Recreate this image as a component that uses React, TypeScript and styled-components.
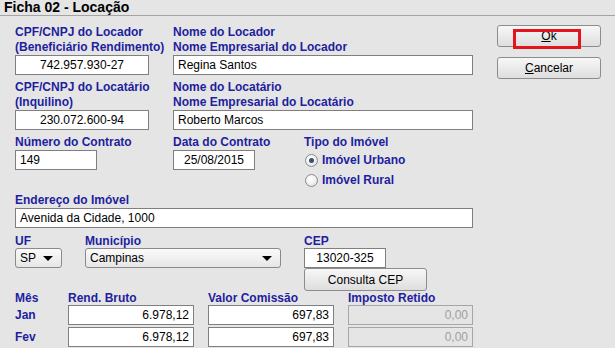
import React from "react";
import styled, { createGlobalStyle } from "styled-components";

const GlobalStyle = createGlobalStyle`
  html, body {
    margin: 0;
    padding: 0;
    background: #e5e5e5;
  }
  body {
    font-family: "Liberation Sans", Arial, sans-serif;
    font-size: 12px;
    color: #000;
  }
  * {
    box-sizing: border-box;
  }
`;

const Window = styled.div`
  width: 615px;
  height: 348px;
  overflow: hidden;
  background: #e5e5e5;
`;

const Header = styled.div`
  height: 16px;
  border-bottom: 1px solid #a3a3a3;
  padding-left: 4px;
  font-size: 14px;
  font-weight: bold;
  line-height: 15px;
`;

const Body = styled.div`
  display: flex;
  padding-left: 15px;
  gap: 24px;
`;

const Form = styled.div`
  width: 458px;
  padding-top: 9px;
  display: flex;
  flex-direction: column;
`;

const Row = styled.div<{ $cols: string; $top?: number }>`
  display: grid;
  grid-template-columns: ${(p) => p.$cols};
  margin-top: ${(p) => p.$top ?? 0}px;
  align-items: start;
`;

const Field = styled.div`
  display: flex;
  flex-direction: column;
`;

const Label = styled.label<{ $lh?: number }>`
  color: #1e1e9e;
  font-weight: bold;
  font-size: 12px;
  line-height: ${(p) => p.$lh ?? 15}px;
  white-space: nowrap;
`;

const Input = styled.input<{ $w: number; $align?: "left" | "center" | "right" }>`
  width: ${(p) => p.$w}px;
  height: 20px;
  border: 1px solid #7f7f7f;
  background: #fff;
  font-family: "Liberation Sans", Arial, sans-serif;
  font-size: 12px;
  color: #000;
  padding: 0 4px;
  margin: 0;
  outline: none;
  text-align: ${(p) => p.$align ?? "left"};

  &:disabled {
    background: #e5e5e5;
    border-color: #a6a6a6;
    color: #a0a0a0;
  }
`;

const RadioGroup = styled.div`
  display: flex;
  flex-direction: column;
`;

const RadioItem = styled.div`
  height: 20px;
  display: flex;
  align-items: center;
  gap: 4px;
  padding-left: 1px;
  color: #1e1e9e;
  font-weight: bold;
`;

const RadioCircle = styled.span<{ $checked?: boolean }>`
  width: 13px;
  height: 13px;
  border-radius: 50%;
  border: 1px solid #8a8a8a;
  background: radial-gradient(circle at 40% 35%, #ffffff 0%, #f0f0f0 50%, #d6d6d6 100%);
  display: flex;
  align-items: center;
  justify-content: center;

  &::after {
    content: "";
    display: ${(p) => (p.$checked ? "block" : "none")};
    width: 5px;
    height: 5px;
    border-radius: 50%;
    background: #3d4d7a;
  }
`;

const Select = styled.div<{ $w: number }>`
  width: ${(p) => p.$w}px;
  height: 20px;
  border: 1px solid #8a8a8a;
  border-radius: 3px;
  background: linear-gradient(#fbfbfb, #e6e6e6);
  display: flex;
  align-items: center;
  justify-content: space-between;
  padding: 0 8px 0 4px;
`;

const Arrow = styled.span`
  width: 0;
  height: 0;
  border-left: 5px solid transparent;
  border-right: 5px solid transparent;
  border-top: 5px solid #000;
`;

const Button = styled.button<{ $w: number; $h?: number }>`
  width: ${(p) => p.$w}px;
  height: ${(p) => p.$h ?? 22}px;
  border: 1px solid #8c8c8c;
  border-radius: 3px;
  background: linear-gradient(#f7f7f7, #dedede);
  font-family: "Liberation Sans", Arial, sans-serif;
  font-size: 12px;
  color: #000;
  padding: 0;
  margin: 0;
  position: relative;

  u {
    text-decoration: underline;
  }
`;

const Highlight = styled.span`
  position: absolute;
  left: 15px;
  top: 3px;
  width: 68px;
  height: 20px;
  border: 3px solid #e3141b;
`;

const Side = styled.div`
  padding-top: 9px;
  display: flex;
  flex-direction: column;
  gap: 10px;
`;

const CepBox = styled.div`
  display: flex;
  flex-direction: column;
`;

const MonthGrid = styled.div`
  display: grid;
  grid-template-columns: 53px 140px 140px 125px;
  grid-template-rows: 12px;
  grid-auto-rows: 20px;
  row-gap: 2px;
`;

const HeadCell = styled.div`
  color: #1e1e9e;
  font-weight: bold;
  line-height: 14px;
  height: 12px;
  white-space: nowrap;
`;

const MonthLabel = styled.div`
  color: #1e1e9e;
  font-weight: bold;
  line-height: 20px;
`;

const months = [
  { m: "Jan", bruto: "6.978,12", comissao: "697,83", imposto: "0,00" },
  { m: "Fev", bruto: "6.978,12", comissao: "697,83", imposto: "0,00" },
  { m: "Mar", bruto: "6.978,12", comissao: "697,83", imposto: "0,00" },
];

const App = () => {
  return (
    <Window>
      <GlobalStyle />
      <Header>Ficha 02 - Locação</Header>
      <Body>
        <Form>
          <Row $cols="158px 300px">
            <Field>
              <Label>CPF/CNPJ do Locador</Label>
              <Label>(Beneficiário Rendimento)</Label>
              <Input $w={134} $align="center" value="742.957.930-27" readOnly />
            </Field>
            <Field>
              <Label>Nome do Locador</Label>
              <Label>Nome Empresarial do Locador</Label>
              <Input $w={300} value="Regina Santos" readOnly />
            </Field>
          </Row>

          <Row $cols="158px 300px" $top={5}>
            <Field>
              <Label>CPF/CNPJ do Locatário</Label>
              <Label>(Inquilino)</Label>
              <Input $w={134} $align="center" value="230.072.600-94" readOnly />
            </Field>
            <Field>
              <Label>Nome do Locatário</Label>
              <Label>Nome Empresarial do Locatário</Label>
              <Input $w={300} value="Roberto Marcos" readOnly />
            </Field>
          </Row>

          <Row $cols="158px 131px 1fr" $top={5}>
            <Field>
              <Label>Número do Contrato</Label>
              <Input $w={82} value="149" readOnly />
            </Field>
            <Field>
              <Label>Data do Contrato</Label>
              <Input $w={82} $align="center" value="25/08/2015" readOnly />
            </Field>
            <Field>
              <Label>Tipo do Imóvel</Label>
              <RadioGroup>
                <RadioItem>
                  <RadioCircle $checked />
                  Imóvel Urbano
                </RadioItem>
                <RadioItem>
                  <RadioCircle />
                  Imóvel Rural
                </RadioItem>
              </RadioGroup>
            </Field>
          </Row>

          <Row $cols="1fr" $top={3}>
            <Field>
              <Label>Endereço do Imóvel</Label>
              <Input $w={458} value="Avenida da Cidade, 1000" readOnly />
            </Field>
          </Row>

          <Row $cols="70px 219px 1fr" $top={6}>
            <Field>
              <Label $lh={14}>UF</Label>
              <Select $w={47}>
                SP
                <Arrow />
              </Select>
            </Field>
            <Field>
              <Label $lh={14}>Município</Label>
              <Select $w={196}>
                Campinas
                <Arrow />
              </Select>
            </Field>
            <Field>
              <Label $lh={14}>CEP</Label>
              <CepBox>
                <Input $w={82} $align="center" value="13020-325" readOnly />
                <Button $w={123} $h={23}>Consulta CEP</Button>
              </CepBox>
            </Field>
          </Row>

          <MonthGrid>
            <HeadCell>Mês</HeadCell>
            <HeadCell>Rend. Bruto</HeadCell>
            <HeadCell>Valor Comissão</HeadCell>
            <HeadCell>Imposto Retido</HeadCell>
            {months.map((r) => (
              <React.Fragment key={r.m}>
                <MonthLabel>{r.m}</MonthLabel>
                <Input $w={126} $align="right" value={r.bruto} readOnly />
                <Input $w={126} $align="right" value={r.comissao} readOnly />
                <Input $w={125} $align="right" value={r.imposto} disabled />
              </React.Fragment>
            ))}
          </MonthGrid>
        </Form>

        <Side>
          <Button $w={104}>
            <u>O</u>k
            <Highlight />
          </Button>
          <Button $w={104}>
            <u>C</u>ancelar
          </Button>
        </Side>
      </Body>
    </Window>
  );
};

export default App;
